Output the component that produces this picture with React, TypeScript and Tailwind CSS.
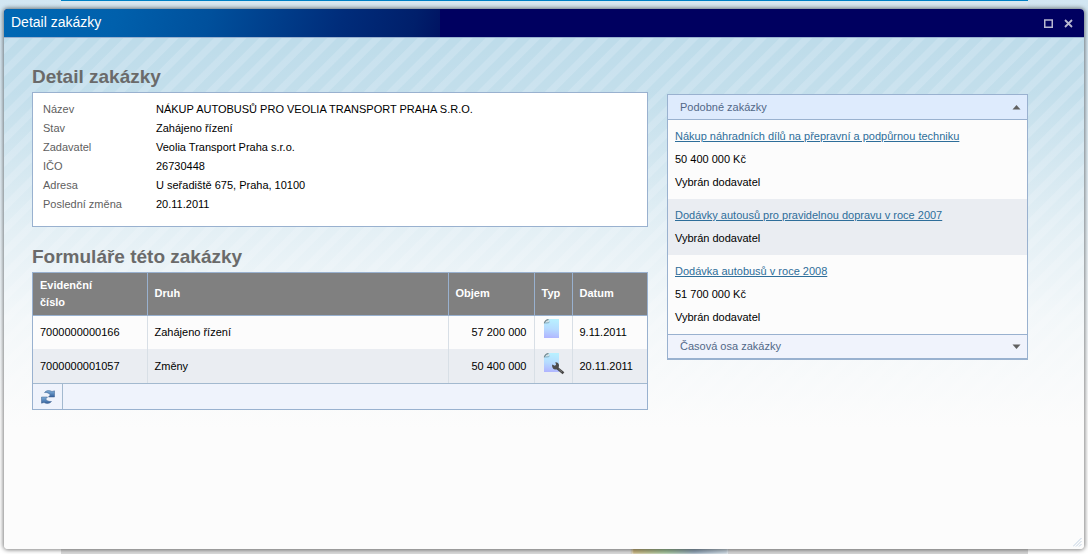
import React, { useState } from 'react';
import clsx from 'clsx';

const details = [
  { label: 'Název', value: 'NÁKUP AUTOBUSŮ PRO VEOLIA TRANSPORT PRAHA S.R.O.' },
  { label: 'Stav', value: 'Zahájeno řízení' },
  { label: 'Zadavatel', value: 'Veolia Transport Praha s.r.o.' },
  { label: 'IČO', value: '26730448' },
  { label: 'Adresa', value: 'U seřadiště 675, Praha, 10100' },
  { label: 'Poslední změna', value: '20.11.2011' },
];

const forms = [
  { id: '7000000000166', kind: 'Zahájeno řízení', amount: '57 200 000', edited: false, date: '9.11.2011' },
  { id: '7000000001057', kind: 'Změny', amount: '50 400 000', edited: true, date: '20.11.2011' },
];

const similar = [
  {
    title: 'Nákup náhradních dílů na přepravní a podpůrnou techniku',
    price: '50 400 000 Kč',
    state: 'Vybrán dodavatel',
  },
  { title: 'Dodávky autousů pro pravidelnou dopravu v roce 2007', state: 'Vybrán dodavatel' },
  { title: 'Dodávka autobusů v roce 2008', price: '51 700 000 Kč', state: 'Vybrán dodavatel' },
];

function DocumentIcon({ edited }: { edited: boolean }) {
  return (
    <svg width="22" height="22" viewBox="0 0 22 22" role="img" aria-label={edited ? 'Změna' : 'Dokument'}>
      <defs>
        <linearGradient id="sheet" x1="0.4" y1="0" x2="0.3" y2="1">
          <stop offset="0" stopColor="#b8f0ff" />
          <stop offset="0.5" stopColor="#b6dcff" />
          <stop offset="1" stopColor="#b0b4ff" />
        </linearGradient>
      </defs>
      <path d="M5.500 0H16v19H1V4.500z" fill="url(#sheet)" />
      <path d="M1 4.500C1.500 2.500 3.500.5 6.500.3 5.700 1.500 7 2.800 5.500 3.500 4.300 3.800 2.500 3.200 1 4.500z" fill="#d3e3e8" />
      <path d="M1.300 4.300C1.700 2.500 3.300.9 5.500.5" fill="none" stroke="#708890" strokeWidth="1.200" />
      <path d="M2.500 4.200c1.500-.6 3 0 4-1.200" fill="none" stroke="#7fa6b8" strokeWidth="1" />
      {edited && (
        <>
          <path d="M13.500 14.500l6 5" stroke="#464646" strokeWidth="2.600" strokeLinecap="square" />
          <path
            d="M9.200 11.600l2.600 1.200 1.300-1-.8-2.600c2.300-.1 4 1.400 3.700 3.600l-.3 1.500-2 2-1.500.1c-2.200.1-3.500-2.300-3-4.800z"
            fill="#4d4d4d"
          />
          <path d="M15.500 16l3.500 3" stroke="#888" strokeWidth=".7" />
        </>
      )}
    </svg>
  );
}

function RefreshIcon() {
  return (
    <svg width="14" height="14" viewBox="0 0 14 14" aria-hidden="true">
      <defs>
        <linearGradient id="arrows" x1="0" y1="0" x2="0" y2="1">
          <stop offset="0" stopColor="#7fb0dc" />
          <stop offset="1" stopColor="#35619c" />
        </linearGradient>
      </defs>
      <path
        d="M3.500 2.500C5 .3 8.500 0 11 1.500L13.500.8V7H7.500l1.800-2C8.500 3.200 6 2.300 3.500 2.500z"
        fill="url(#arrows)"
        stroke="#3d5f8c"
        strokeWidth=".5"
      />
      <path
        d="M10.500 11.500C9 13.700 5.500 14 3 12.500L.5 13.200V7h6L4.700 9c.8 1.800 3.300 2.700 5.800 2.500z"
        fill="url(#arrows)"
        stroke="#3d5f8c"
        strokeWidth=".5"
      />
    </svg>
  );
}

function WindowBar() {
  return (
    <header className="flex h-[29px] shrink-0 items-center justify-between rounded-t border-b border-[#99b1cf] bg-[#000060] bg-[linear-gradient(105deg,#0068b4_0px,#0060ac_110px,#00509c_200px,#002c7a_330px,#001f6b_400px,#000e5e_440px)] bg-[length:436px_100%] bg-no-repeat pr-[11px] pl-[7px]">
      <h1 className="pb-0.5 text-[14px] leading-5 text-white">Detail zakázky</h1>
      <div className="flex gap-[11px]">
        <button type="button" aria-label="Maximalizovat" className="flex size-[9px] items-center justify-center">
          <svg width="9" height="9" viewBox="0 0 9 9" className="shrink-0">
            <path d="M.75 1h7.500v7.250H.75z" fill="none" stroke="#b8b8d0" strokeWidth="1.500" />
          </svg>
        </button>
        <button type="button" aria-label="Zavřít" className="flex size-[9px] items-center justify-center">
          <svg width="9" height="9" viewBox="0 0 9 9" className="shrink-0">
            <path d="M1 1l7 7M8 1L1 8" stroke="#b8b8d0" strokeWidth="1.800" />
          </svg>
        </button>
      </div>
    </header>
  );
}

function Details() {
  return (
    <dl className="border border-[#99b1cf] bg-white px-2.5 pt-[7px] pb-3">
      {details.map((row) => (
        <div key={row.label} className="flex leading-[19px]">
          <dt className="w-[113px] shrink-0 text-[#606060]">{row.label}</dt>
          <dd>{row.value}</dd>
        </div>
      ))}
    </dl>
  );
}

function FormsTable() {
  return (
    <div className="border border-[#99b1cf]">
      <table className="w-full table-fixed border-collapse text-left">
        <colgroup>
          <col className="w-[114px]" />
          <col />
          <col className="w-[86px]" />
          <col className="w-[38px]" />
          <col className="w-[75px]" />
        </colgroup>
        <thead>
          <tr className="h-[42px] border-b border-[#99b1cf] bg-[#808080] leading-[17px] text-white">
            <th scope="col" className="border-r border-[#99b1cf] px-[7px]">
              Evidenční
              <br />
              číslo
            </th>
            {['Druh', 'Objem', 'Typ', 'Datum'].map((name) => (
              <th key={name} scope="col" className="border-r border-[#99b1cf] pl-[7px] last:border-r-0">
                {name}
              </th>
            ))}
          </tr>
        </thead>
        <tbody>
          {forms.map((form) => (
            <tr key={form.id} className="h-[34px] bg-[#fcfcfc] even:bg-[#eaedf2]">
              <td className="border-r border-[#d8dfe6] px-[7px]">{form.id}</td>
              <td className="border-r border-[#d8dfe6] px-[7px]">{form.kind}</td>
              <td className="border-r border-[#d8dfe6] px-[7px] text-right">{form.amount}</td>
              <td className="border-r border-[#d8dfe6] pb-1 pl-2 [&>svg]:block">
                <DocumentIcon edited={form.edited} />
              </td>
              <td className="px-[7px]">{form.date}</td>
            </tr>
          ))}
        </tbody>
      </table>
      <div className="flex h-[26px] border-t border-[#a3b9cf] bg-[#eff3fc]">
        <button type="button" aria-label="Obnovit" className="flex w-[30px] items-center justify-center border-r border-[#a3b9cf]">
          <RefreshIcon />
        </button>
      </div>
    </div>
  );
}

function PanelHeader({ title, open, onToggle }: { title: string; open: boolean; onToggle: () => void }) {
  return (
    <button
      type="button"
      aria-expanded={open}
      onClick={onToggle}
      className={clsx(
        'flex w-full items-center justify-between pr-1.5 pl-3 text-[#526888]',
        open ? 'h-[25px] border-b border-[#99b1cf] bg-[#deebfd]' : 'h-[23px] bg-[#f0f3fc]'
      )}
    >
      {title}
      <svg width="9" height="5" viewBox="0 0 9 5" aria-hidden="true">
        <path d={open ? 'M4.500 0L8.500 4.500h-8z' : 'M4.500 5L.5.500h8z'} fill="#606060" />
      </svg>
    </button>
  );
}

function SidePanels() {
  const [active, setActive] = useState<'similar' | 'timeline' | null>('similar');
  const toggle = (name: 'similar' | 'timeline') => setActive(active === name ? null : name);

  return (
    <aside className="mt-[34px] border border-b-2 border-[#99b1cf]">
      <PanelHeader title="Podobné zakázky" open={active === 'similar'} onToggle={() => toggle('similar')} />
      {active === 'similar' && (
        <ul className="border-b border-[#99b1cf]">
          {similar.map((item) => (
            <li key={item.title} className="bg-[#fcfcfc] px-[7px] py-[5px] leading-[23px] even:bg-[#eaedf2]">
              <a href="#" className="text-[#2e6e9a] underline">
                {item.title}
              </a>
              {item.price && <p>{item.price}</p>}
              <p>{item.state}</p>
            </li>
          ))}
        </ul>
      )}
      <PanelHeader title="Časová osa zakázky" open={active === 'timeline'} onToggle={() => toggle('timeline')} />
    </aside>
  );
}

function Backdrop() {
  return (
    <div aria-hidden="true" className="absolute inset-0 flex flex-col justify-between pr-[60px] pl-[61px]">
      <div className="h-2 border-t border-[#0080c4] bg-[#d9e8f1]" />
      <div className="flex h-2.5">
        <div className="flex-1 bg-[#dcdcdc]" />
        <div className="h-full w-24 bg-[linear-gradient(90deg,#c8b27c,#9dbf96_35%,#8fa3b5_65%,#c9d6df)] blur-[1px]" />
        <div className="w-[300px] bg-[#d6d6d6]" />
      </div>
    </div>
  );
}

export default function App() {
  return (
    <div className="relative flex min-h-screen flex-col bg-[linear-gradient(#d2e6f2,#ffffff_420px)] px-1 pt-[9px] pb-[5px] font-['Liberation_Sans',Arial,sans-serif] text-[11px] text-black">
      <Backdrop />
      <section className="relative flex flex-1 flex-col rounded bg-[#fcfcfc] shadow-[0_0_4px_1px_rgba(0,0,0,0.5)]">
        <WindowBar />
        <div className="flex-1 rounded-b bg-[linear-gradient(rgba(252,252,252,0)_0px,rgba(252,252,252,0.08)_55px,rgba(252,252,252,0.6)_190px,rgba(252,252,252,0.85)_280px,#fcfcfc_390px),repeating-linear-gradient(135deg,#bedcea_0px,#bedcea_4px,#c8e1ee_5px,#c8e1ee_11px,#bedcea_12px,#bedcea_16px)]">
          <main className="grid grid-cols-[minmax(0,616fr)_minmax(0,361fr)] items-start gap-[19px] pt-[22px] pr-14 pb-8 pl-7">
            <div>
              <h2 className="pt-px text-[19px] leading-[31px] font-bold text-[#6a6a6a]">Detail zakázky</h2>
              <Details />
              <h2 className="mt-3.5 text-[19px] leading-[31px] font-bold text-[#6a6a6a]">Formuláře této zakázky</h2>
              <FormsTable />
            </div>
            <SidePanels />
          </main>
        </div>
        <svg width="9" height="9" viewBox="0 0 9 9" className="absolute right-0.5 bottom-0.5" aria-hidden="true">
          <path d="M0 8.500L8.500 0M3 8.500L8.500 3M6 8.500L8.500 6" stroke="#c3d2e2" strokeWidth="1" />
        </svg>
      </section>
    </div>
  );
}
